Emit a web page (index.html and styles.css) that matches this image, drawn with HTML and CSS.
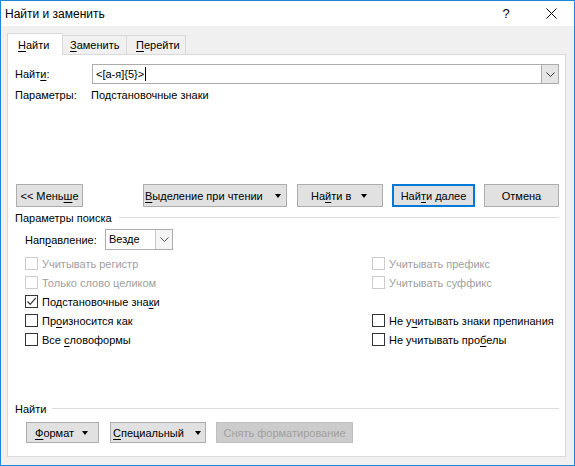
FILE: index.html
```html
<!DOCTYPE html>
<html lang="ru">
<head>
<meta charset="utf-8">
<link rel="stylesheet" href="styles.css">
</head>
<body>
<div class="window">
  <div class="titlebar">
    <span class="title">Найти и заменить</span>
    <span class="tb-help">?</span>
    <span class="tb-close"><svg width="11" height="11" viewBox="0 0 11 11"><path d="M0.5 0.5 L10.5 10.5 M10.5 0.5 L0.5 10.5" stroke="#000" stroke-width="1" fill="none"/></svg></span>
  </div>
  <div class="body">
    <div class="tabs">
      <div class="tab active"><u>Н</u>айти</div>
      <div class="tab"><u>З</u>аменить</div>
      <div class="tab"><u>П</u>ерейти</div>
    </div>
    <div class="panel">
      <div class="find-row">
        <span class="lbl">Найт<u>и</u>:</span>
        <div class="combo">
          <span class="combo-text">&lt;[а-я]{5}&gt;<span class="caret"></span></span>
          <span class="combo-btn"><svg width="9" height="5" viewBox="0 0 9 5"><path d="M0.5 0.5 L4.5 4.5 L8.5 0.5" stroke="#333" fill="none"/></svg></span>
        </div>
      </div>
      <div class="params-row">
        <span class="lbl">Параметры:</span>
        <span class="params-val">Подстановочные знаки</span>
      </div>
      <div class="btn-row">
        <button class="btn w-less"><span>&lt;&lt; Мень<u>ш</u>е</span></button>
        <button class="btn dd w-read"><span><u>В</u>ыделение при чтении</span><i class="tri"></i></button>
        <button class="btn dd w-in"><span>На<u>й</u>ти в</span><i class="tri"></i></button>
        <button class="btn w-next primary"><span>Най<u>т</u>и далее</span></button>
        <button class="btn w-cancel"><span>Отмена</span></button>
      </div>
      <div class="section-head">
        <span>Параметры поиска</span><span class="rule"></span>
      </div>
      <div class="dir-row">
        <span class="dir-lbl">Нап<u>р</u>авление:</span>
        <div class="select">
          <span class="select-text">Везде</span>
          <span class="select-btn"><svg width="9" height="5" viewBox="0 0 9 5"><path d="M0.5 0.5 L4.5 4.5 L8.5 0.5" stroke="#555" fill="none"/></svg></span>
        </div>
      </div>
      <div class="checks">
        <label class="chk disabled"><span class="box"></span><span>Учитывать регистр</span></label>
        <label class="chk disabled"><span class="box"></span><span>Учитывать префикс</span></label>
        <label class="chk disabled"><span class="box"></span><span>Только слово целиком</span></label>
        <label class="chk disabled"><span class="box"></span><span>Учитывать суффикс</span></label>
        <label class="chk"><span class="box"><svg width="11" height="11" viewBox="0 0 11 11"><path d="M1.5 5.5 L4.2 8.3 L9.8 1.8" stroke="#333" stroke-width="1.2" fill="none"/></svg></span><span>Подстановочные зна<u>к</u>и</span></label>
        <span></span>
        <label class="chk"><span class="box"></span><span>Пр<u>о</u>износится как</span></label>
        <label class="chk"><span class="box"></span><span>Не у<u>ч</u>итывать знаки препинания</span></label>
        <label class="chk"><span class="box"></span><span>Все <u>с</u>ловоформы</span></label>
        <label class="chk"><span class="box"></span><span>Не учитывать про<u>б</u>елы</span></label>
      </div>
      <div class="bottom">
        <div class="section-head bottom-head">
          <span>Найти</span><span class="rule"></span>
        </div>
        <div class="fmt-row">
          <button class="btn dd small w-fmt"><span><u>Ф</u>ормат</span><i class="tri"></i></button>
          <button class="btn dd small w-spec"><span><u>С</u>пециальный</span><i class="tri"></i></button>
          <button class="btn small w-clear" disabled><span>Снять форматирование</span></button>
        </div>
      </div>
    </div>
  </div>
</div>
</body>
</html>
```

FILE: styles.css
```css
* { box-sizing: border-box; }
html, body { margin: 0; padding: 0; background: #f0f0f0; }
body {
  font-family: "Liberation Sans", Arial, sans-serif;
  font-size: 11px;
  color: #000;
}
u { text-decoration: underline; text-underline-offset: 2px; }
.window {
  width: 575px;
  height: 466px;
  border: 1px solid #1c86d9;
  background: #f0f0f0;
  display: flex;
  flex-direction: column;
}
.titlebar {
  height: 25px;
  background: #fff;
  display: flex;
  align-items: center;
  padding-left: 4px;
  flex: none;
}
.title { flex: 1; font-size: 12px; }
.tb-help { width: 12px; text-align: center; margin-right: 34px; font-size: 13px; }
.tb-close { width: 11px; height: 11px; margin-right: 17px; display: flex; }
.body {
  flex: 1;
  display: flex;
  flex-direction: column;
  padding: 7px 8px 8px 6px;
}
.tabs {
  display: flex;
  align-items: flex-end;
  height: 22px;
  position: relative;
  z-index: 1;
  margin-bottom: -1px;
}
.tab {
  height: 19px;
  border: 1px solid #d9d9d9;
  border-left: none;
  border-bottom: none;
  background: #f0f0f0;
  padding: 0 7px;
  line-height: 19px;
  margin-bottom: 1px;
  white-space: nowrap;
}
.tab.active {
  height: 22px;
  border-left: 1px solid #d9d9d9;
  background: #fff;
  width: 56px;
  padding-left: 10px;
  line-height: 23px;
  margin-bottom: 0;
}
.tab:nth-child(2) { width: 64px; padding-left: 7px; }
.tab:nth-child(3) { width: 59px; padding-left: 9px; }
.panel {
  flex: 1;
  background: #fff;
  border: 1px solid #d9d9d9;
  padding: 0 6px 13px 7px;
  display: flex;
  flex-direction: column;
}
.find-row {
  display: flex;
  align-items: center;
  margin-top: 9px;
  height: 20px;
}
.find-row .lbl { width: 77px; }
.combo {
  flex: 1;
  height: 20px;
  border: 1px solid #acacac;
  display: flex;
  align-items: stretch;
}
.combo-text { flex: 1; padding-left: 3px; display: flex; align-items: center; }
.caret { display: inline-block; width: 1px; height: 14px; background: #000; margin-left: 1px; }
.combo-btn {
  width: 17px;
  background: #e5e5e5;
  border-left: 1px solid #acacac;
  display: flex;
  align-items: center;
  justify-content: center;
}
.params-row { display: flex; margin-top: 4px; height: 15px; line-height: 15px; }
.params-row .lbl { width: 76px; }
.btn-row { display: flex; margin-top: 81px; height: 23px; }
.btn {
  font: inherit;
  color: #000;
  background: #e1e1e1;
  border: 1px solid #adadad;
  height: 23px;
  padding: 0;
  margin: 0;
  display: flex;
  align-items: center;
  justify-content: center;
  white-space: nowrap;
  flex: none;
}
.btn.dd { justify-content: space-between; }
.btn.primary { border: 2px solid #0078d7; }
.tri {
  display: inline-block;
  width: 0; height: 0;
  border-left: 3.5px solid transparent;
  border-right: 3.5px solid transparent;
  border-top: 4px solid #000;
}
.w-less { width: 67px; margin-left: 1px; }
.w-read { width: 144px; margin-left: 60px; padding: 0 5px 0 1px; }
.w-in { width: 86px; margin-left: 10px; padding: 0 15px 0 13px; }
.w-next { width: 83px; margin-left: 9px; }
.w-cancel { width: 75px; margin-left: 9px; }
.section-head {
  display: flex;
  align-items: center;
  height: 15px;
  margin-top: 3px;
}
.rule { flex: 1; height: 1px; background: #dcdcdc; margin-left: 7px; margin-top: -1px; }
.dir-row {
  display: flex;
  align-items: center;
  margin-top: 4px;
  height: 21px;
  padding-left: 10px;
}
.dir-lbl { width: 80px; }
.select {
  width: 68px;
  height: 21px;
  border: 1px solid #acacac;
  display: flex;
}
.select-text { flex: 1; padding-left: 3px; line-height: 19px; }
.select-btn {
  width: 17px;
  border-left: 1px solid #c8c8c8;
  background: #f5f5f5;
  display: flex;
  align-items: center;
  justify-content: center;
}
.checks {
  display: grid;
  grid-template-columns: 347px 1fr;
  grid-auto-rows: 19px;
  margin-top: 4px;
  padding-left: 10px;
}
.chk { display: flex; align-items: center; white-space: nowrap; }
.box {
  width: 13px; height: 13px;
  border: 1px solid #333;
  background: #fff;
  margin-right: 4px;
  display: flex;
  align-items: center;
  justify-content: center;
  flex: none;
}
.chk.disabled { color: #a0a0a0; }
.chk.disabled .box { border-color: #cccccc; }
.bottom { margin-top: auto; }
.bottom-head { margin-top: 0; }
.bottom-head .rule { margin-left: 6px; }
.fmt-row { display: flex; margin-top: 6px; height: 21px; }
.btn.small { height: 21px; }
.w-fmt { width: 73px; margin-left: 11px; padding: 0 10px 0 8px; }
.w-spec { width: 96px; margin-left: 11px; padding: 0 4px 0 2px; }
.w-clear { width: 137px; margin-left: 10px; background: #cccccc; border-color: #bfbfbf; color: #a0a0a0; }
```
